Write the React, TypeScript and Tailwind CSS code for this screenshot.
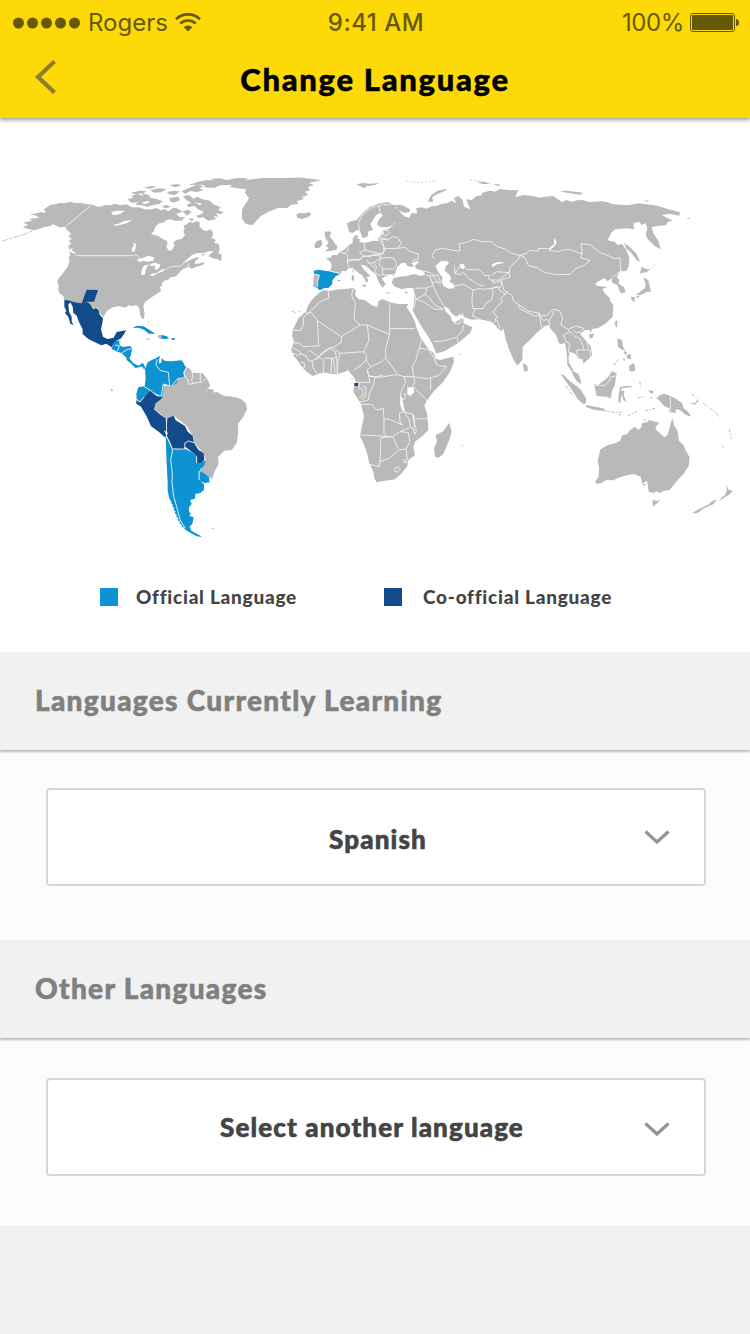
import type { ReactNode } from "react";

const LAND = "#b9b9b9";
const OFFICIAL = "#0d93d2";
const CO_OFFICIAL = "#114b8a";

/* Every map region is drawn on a grid three times finer than the page. */
function Region({ x, y, children }: { x: number; y: number; children: ReactNode }) {
  return (
    <g transform={`translate(${x} ${y}) scale(0.33333)`} strokeLinejoin="round">
      {children}
    </g>
  );
}

function Borders({ d }: { d: string }) {
  return <path d={d} fill="none" stroke="#f1f1f1" strokeWidth="2.800" strokeLinejoin="round" />;
}

function Sea({ d }: { d: string }) {
  return <path d={d} fill="#fff" />;
}

function NorthAmerica() {
  return (
    <Region x={0} y={170}>
      <path
        fill={LAND}
        d="M68 172L85 165 70 158 95 152 88 146 118 143 106 136 88 134 122 127 138 128 132 118 150 105 163 103 180 99 195 99 210 95 225 99 245 99 262 103 275 103 288 109 300 110 315 105 330 106 345 101 360 106 380 103 395 112 415 112 435 118 455 118 470 114 482 121 494 117 505 124 520 113 535 116 548 125 528 132 540 142 556 140 545 152 525 152 510 148 500 150 488 158 478 160 465 172 462 183 453 192 475 198 486 206 500 212 503 218 499 232 508 243 516 240 523 228 521 215 532 209 545 207 555 195 550 185 554 176 551 168 560 162 570 155 578 158 590 153 600 158 598 168 606 178 618 184 632 178 640 190 635 203 648 210 642 219 657 222 658 235 640 243 625 244 612 249 592 249 575 256 562 267 548 280 560 275 575 268 590 262 598 264 586 273 584 282 600 280 614 275 610 284 585 292 575 297 568 290 550 296 540 305 533 315 524 320 510 322 505 331 496 330 485 340 487 345 480 352 483 362 470 372 450 385 435 396 430 408 434 430 432 446 426 447 420 433 418 414 408 405 396 409 386 406 375 413 355 408 335 413 320 424 310 442 300 430 297 418 288 412 282 418 270 402 262 396 245 400 225 397 205 390 193 390 190 378 178 370 175 358 176 345 172 335 176 325 190 308 203 290 209 272 206 262 212 255 207 245 220 249 228 256 223 245 207 237 205 226 214 222 205 212 216 208 205 200 214 190 203 182 195 170 178 172 160 163 150 168 130 172 120 176 100 180 82 176Z"
      />
      <path
        fill={LAND}
        d="M382 88L400 83 394 77 412 72 430 78 425 70 445 74 452 83 470 87 488 94 478 102 460 105 440 110 425 106 405 105 415 97 396 99ZM392 68L420 62 440 64 430 70 405 73ZM450 60L480 55 500 58 482 67 462 68ZM430 53L455 48 470 50 450 56ZM508 46L530 42 545 46 525 52ZM500 66L525 62 540 65 524 75 508 73ZM545 64L575 50 590 44 612 48 598 55 612 60 592 66 570 63 556 72ZM508 84L535 80 540 90 522 98 510 94ZM548 78L568 76 580 86 592 80 607 88 630 92 640 103 662 112 655 121 672 126 660 133 648 130 655 140 641 138 648 148 624 152 610 142 596 144 587 137 605 133 611 125 594 118 582 108 566 112 560 104 574 98 560 91ZM565 45L595 35 620 30 645 31 630 26 660 25 680 30 710 24 745 25 730 34 700 38 685 45 660 46 645 53 618 53 610 44ZM548 124L565 119 575 127 560 137ZM565 145L583 147 575 154ZM625 258L648 237 660 235 655 249 665 255 663 274 650 266 640 266ZM604 252L615 253 608 258ZM485 110L500 104 512 110 499 115Z"
      />
      <path fill="none" stroke={LAND} strokeWidth="2.5" strokeDasharray="16 4 9 3" d="M8 213L40 203 75 192 110 177 150 165M207 190L220 180 218 200 224 220 222 240" />
      <Sea d="M333 127L350 122 375 122 360 132 340 136ZM338 165L356 161 375 152 397 151 376 161 347 167ZM400 220L408 221 405 243 397 247 395 233 401 230ZM410 268L430 263 445 257 462 262 460 272 440 275 432 272 418 277ZM432 287L446 283 438 297 434 314 424 315 425 299ZM449 283L466 278 481 284 478 292 469 300 464 296 466 287 451 288ZM448 316L466 308 472 310 458 319ZM470 307L490 299 492 303 474 310ZM205 205L212 202 209 215ZM210 237L218 234 214 244ZM425 98L442 92 450 96 435 103ZM583 95L605 101 600 106Z" />
      <path fill={LAND} d="M726 120L738 100 748 85 740 55 720 56 686 50 712 45 740 50 751 30 751 165 735 160 726 145Z" />
      <Borders d="M275 104L197 170M228 257L403 257M405 253L418 262M482 300L500 297 515 290 542 288 556 275M562 293L567 278" />
      <path fill={CO_OFFICIAL} d="M260 359L294 360 282 395 262 395 245 400ZM193 390L205 391 225 397 245 400 262 396 270 402 280 418 288 414 296 420 299 434 309 445 307 460 303 478 309 500 322 507 341 503 350 486 378 481 372 493 362 506 352 511 342 520 335 532 319 521 304 526 285 517 264 506 248 492 248 478 238 458 230 437 220 428 218 410 211 397 205 404 207 425 215 440 215 455 221 465 211 461 205 440 195 430 199 422 193 410Z" />
      <path fill={OFFICIAL} d="M397 474L411 467 430 469 448 479 466 491 446 491 432 479 415 473ZM483 495L499 498 508 505 495 507 484 506ZM346 512L357 512 359 526 369 531 390 528 397 535 392 558 385 571 378 562 364 549 352 545 334 536Z" />
      <path fill={LAND} d="M475 495L483 496 482 506 474 503ZM437 505L450 507 445 509ZM359 508L362 512 358 524ZM446 452L449 462 444 456Z" />
      <path fill={CO_OFFICIAL} d="M515 505H525V509H515Z" />
      <Borders d="M346 525L358 528 352 543M366 548L384 538 397 536" />
    </Region>
  );
}

function SouthAmerica() {
  return (
    <Region x={90} y={280}>
      <path
        fill={LAND}
        d="M287 261L300 266 307 278 320 279 338 280 350 295 361 316 347 336 356 326 372 330 370 338 380 335 403 348 420 349 437 352 454 358 468 371 471 387 460 411 445 430 444 462 440 489 425 510 403 512 384 531 386 552 374 574 366 598 350 585 328 573 341 550 348 540 340 520 313 488 310 470 290 438 252 407 229 416 211 402 193 386 197 369 216 355 220 317 245 318 262 297 285 291 282 276ZM366 743L374 745 364 748ZM168 176L180 178 172 180ZM207 166L214 169 212 176Z"
      />
      <path fill={OFFICIAL} d="M107 225L118 235 130 250 146 257 158 248 165 260 163 270 156 259 147 262 136 264 122 250 110 240ZM165 266L173 247 185 240 198 235 210 227 207 240 209 251 215 243 214 235 226 243 242 244 260 242 275 241 281 250 288 263 280 276 283 291 263 295 260 310 244 318 220 312 220 332 216 357 205 345 187 336 180 330 160 355 150 366 140 357 139 341 145 320 164 317 167 298ZM64 328L70 331 64 333ZM227 470L236 480 245 503 260 508 285 506 300 514 320 528 320 545 332 550 348 540 342 558 330 568 327 600 342 613 342 629 331 639 316 642 315 656 300 660 305 672 297 682 297 694 303 704 296 707 311 712 307 731 299 740 304 752 327 765 336 771 320 769 302 759 287 750 275 735 261 707 251 680 243 663 238 656 233 632 233 609 230 551ZM328 573L342 579 357 590 359 607 344 609 328 602Z" />
      <path fill="none" stroke={OFFICIAL} strokeWidth="4" strokeDasharray="7 4" d="M245 665L254 690 267 723 283 745" />
      <path fill={CO_OFFICIAL} d="M139 359L150 366 163 350 181 330 200 347 214 350 214 357 197 370 192 388 211 404 229 416 230 443 229 458 226 473 207 456 183 439 171 411 153 380 139 371ZM232 415L251 407 257 421 285 438 293 455 308 467 312 488 325 509 341 520 343 540 334 549 320 549 320 529 302 513 287 501 280 508 248 506 239 483 229 467 230 443Z" />
      <Borders d="M180 330L160 318 143 321M180 330L200 347 214 348 220 312 239 318 235 277 210 271 198 255 202 238M263 296L245 318M229 416L230 467M229 467L248 510 242 540 247 580 246 605 251 649 260 680 270 719 286 745M247 507L284 507 285 489 296 483 312 488M320 549L320 529M328 573L327 600M288 264L282 283 294 300 296 313 323 308 335 307 348 296M306 278L309 291 304 301 311 309M331 280L331 305M139 359L150 366 163 350" />
      <Sea d="M222 450L234 460 229 466ZM211 236L214 248 207 250Z" />
    </Region>
  );
}

function Greenland() {
  return (
    <path
      fill={LAND}
      d="M228 184L238 181 262 178 285 178 300 177.500 321 180 309 183 314 185 308 187 310 190 305 192 308 195 302 197 304 199 297 201 298 204 291 205 287 208 278 208 268 212 261 216 256 221 253 225 247 224 243 218 242 211 244 206 247 203 249 198 245 193 246 189 237 188Z"
    />
  );
}

function Eurasia() {
  return (
    <Region x={280} y={170}>
      {/* mainland */}
      <path
        fill={LAND}
        d="M182 312L165 306 151 303 155 285 149 273 137 265 152 263 157 255 171 256 180 245 195 238 204 226 218 220 218 206 226 196 235 196 231 205 240 208 238 217 260 218 280 212 295 213 295 202 303 198 303 190 312 192 308 180 325 178 345 160 335 145 322 118 326 103 345 105 365 105 390 118 388 127 372 128 355 120 365 131 376 140 388 143 394 130 412 130 408 115 425 112 440 116 455 109 470 108 485 101 500 100 515 92 529 100 522 84 535 78 548 90 552 110 571 118 563 98 558 88 575 90 590 78 606 76 605 69 630 62 645 65 660 57 690 61 715 60 706 82 730 75 760 78 780 83 795 80 820 78 830 85 845 96 860 90 875 96 890 91 910 90 925 96 940 95 965 94 980 96 1000 103 1020 104 1045 106 1075 100 1100 103 1125 106 1160 116 1200 127 1198 137 1170 132 1145 135 1160 143 1178 152 1163 156 1158 166 1132 168 1115 172 1120 190 1135 212 1142 238 1125 229 1105 210 1097 195 1102 175 1097 160 1085 165 1077 155 1060 160 1062 178 1040 175 1005 178 993 190 983 210 990 213 1005 215 1012 225 1026 222 1038 238 1048 262 1046 290 1038 303 1028 304 1022 300 1010 322 1018 330 1015 340 1032 352 1037 367 1022 370 1012 346 995 337 996 326 982 333 972 325 946 340 950 347 982 351 967 357 974 370 990 385 990 392 1000 405 998 440 978 460 955 474 935 478 933 489 928 480 915 480 900 492 916 510 931 527 937 556 922 570 910 581 908 568 895 566 886 552 870 545 866 560 866 577 876 595 882 600 876 602 862 585 861 555 855 520 840 522 835 515 828 495 815 480 805 465 795 468 772 487 750 510 728 530 727 570 712 587 701 570 690 545 678 512 670 475 665 484 652 475 646 466 635 455 600 448 575 449 550 440 540 432 528 440 515 430 505 415 490 407 498 425 513 440 515 452 525 458 545 445 551 447 550 460 577 472 570 490 545 510 530 522 510 533 495 543 468 551 460 528 445 500 425 470 405 435 398 420 402 395 404 372 400 355 385 353 365 358 345 350 335 340 340 325 360 320 340 318 330 313 305 325 317 342 308 354 296 336 287 312 272 301 255 286 242 284 250 297 271 318 260 322 265 330 261 340 246 316 228 303 217 293 204 296 198 304 185 303Z"
      />
      {/* Scandinavia and islands */}
      <path
        fill={LAND}
        d="M201 160L215 153 230 150 245 133 255 122 270 110 295 101 310 98 328 97 337 108 330 115 335 135 346 152 340 164 322 172 300 171 291 162 298 146 309 136 300 128 288 136 280 149 271 162 279 180 266 184 262 201 247 204 239 181 231 180 218 189 207 185ZM134 185L147 184 154 189 148 199 158 210 166 222 173 229 169 239 150 243 134 244 147 234 137 229 146 219 136 204ZM105 235L103 224 110 213 124 209 127 223 120 233ZM49 136L55 129 75 130 90 126 93 134 83 142 65 147 52 143ZM230 43L247 39 270 41 298 39 283 46 260 48 254 55 238 47ZM443 94L454 75 473 62 502 56 496 62 474 71 457 82 459 97ZM590 35L615 35 630 42 608 42ZM640 42L660 43 655 49ZM242 344L259 344 256 352ZM216 313L223 321 221 333 215 330ZM217 298L222 302 219 310ZM318 367L336 369 320 371ZM372 367L387 365 378 371ZM840 64L860 62 910 68 900 74 860 68ZM1092 92L1108 91 1100 95ZM1032 218L1052 233 1070 252 1080 275 1072 272 1053 248 1040 236Z"
      />
      <path fill={LAND} d="M1084 290L1100 298 1111 298 1099 307 1086 308 1080 312ZM1090 322L1105 330 1108 345 1113 365 1100 366 1090 371 1080 376 1068 374 1085 362 1095 355 1097 342ZM1052 380L1064 381 1064 397 1055 391ZM1068 378L1080 378 1071 384ZM1008 450L1013 455 1010 474 1004 463ZM927 495L940 491 939 501 932 506ZM729 580L741 586 744 600 732 602ZM1012 505L1026 510 1029 530 1035 541 1025 537 1014 530ZM1032 543L1042 546 1037 555ZM1040 558L1052 552 1053 567 1044 566ZM1028 566L1036 566 1032 574ZM1052 590L1062 582 1067 600 1047 602Z" />
      <path fill="none" stroke={LAND} strokeWidth="2" strokeDasharray="6 5" d="M1003 583L1016 566M1112 295L1128 280M380 33L395 36 430 38 470 32M570 30L600 34" />
      {/* inland seas */}
      <Sea d="M345 311L352 290 365 279 377 278 381 287 394 291 402 289 393 280 411 273 417 275 404 289 410 297 428 303 436 313 424 318 402 312 380 318 350 321 340 316ZM466 288L482 274 500 272 507 280 497 289 494 302 510 316 513 327 508 334 522 344 523 355 506 356 490 347 485 335 487 322 475 306ZM539 283L551 281 556 292 548 298 541 293ZM634 285L650 277 670 276 670 280 652 282 640 291ZM822 204L831 217 823 229 810 239 806 236 822 222ZM548 427L551 440 545 440ZM346 110L352 112 349 116Z" />
      {/* Iberia */}
      <path fill={LAND} d="M102 314L118 315 112 335 112 353 99 350Z" />
      <path fill={OFFICIAL} d="M101 302L115 299 140 303 160 305 180 313 167 319 157 331 157 342 146 353 131 355 119 361 109 352 113 335 118 315 103 313ZM174 329L182 332 176 334ZM36 422L40 424 38 427ZM44 425L48 426 45 428ZM57 424L60 422 59 427Z" />
      <Borders d="M151 304L181 310M113 352V335L118 315 104 314M181 247L193 250 204 257 202 276 208 295M204 226L204 242 193 250M251 218L255 240 238 248 250 258 240 268 205 270M255 240L275 246 308 252 312 238 308 213M252 257L272 261 278 254 308 252M203 277L215 270 240 270 249 261M308 252L316 238 300 210 328 207 337 200 353 203 364 220 352 235 310 236M352 235L375 232 390 245 415 252 415 265 396 273M250 260L278 256 302 258 300 266 280 278 266 280 262 270M302 264L325 263 340 264 350 281 345 295M305 262L296 280 308 297 342 297M280 278L290 292 285 305 293 315 305 315M308 297L308 314 330 315 342 313M270 282L281 292 286 294M292 203L315 205 325 213M298 190L320 197 330 187M305 180L327 182M237 195L239 180 235 160 244 140 260 122 280 110 300 107M300 127L297 108 308 103 320 105 330 103M405 298L440 305 460 312M437 315L450 318 474 315 482 338M450 318L456 338 470 335 478 340M460 320L470 332 481 340M404 355L440 354 460 346 456 335M440 354L436 373 408 388 404 374M436 373L447 382 464 405 490 418M408 388L430 395 464 418 488 418M408 388L401 415M460 346L467 366 482 392 490 407M519 348L550 343 580 360 576 380 577 408 585 418 577 438 598 447M577 416L609 416 617 400 635 391 640 367 635 355 650 350 660 355M580 360L600 355 612 358 635 355 655 350M463 268L456 257 465 240 490 235 512 240 540 243 538 222 560 217 582 208 605 215 632 214 652 230 678 238 692 249 720 256M523 285L525 310 540 314 551 307 566 325 595 344 613 348M525 310L545 282 560 298 600 300 615 317 630 316 625 325 640 333M635 317L650 305 688 308 690 290 713 270 720 256M688 308L655 330 636 330 640 340 660 332 665 344M688 309L690 322 664 329M665 344L655 358 675 373 684 365 662 385 667 397 650 410 640 427 650 440 643 458M664 329L672 362 695 375 702 395 718 405 745 423 777 430 778 438 800 436 818 418 838 422 848 443 842 465 865 478 887 468 912 475 905 481M715 405L722 418 770 440 777 430M778 427L780 448 785 472M780 436L790 452 802 448 808 455 810 470M805 455L818 435 820 423M720 256L740 250 750 241 775 243 776 235 802 236 810 241 835 245 850 240 870 238 893 248 907 250M720 256L737 265 745 287 770 292 792 307 830 314 870 313 888 295 912 287 930 272 902 263 907 250 903 222 930 223 958 247 980 255 1005 266 1020 263 1022 304M990 330L1010 312 1018 305M865 478L870 485 850 495 858 515 870 520 866 535 867 550M870 485L885 500 898 504 910 530 912 540 930 540 932 560M912 540L890 540 892 555 900 568M878 480L890 488 900 485 920 515 925 535M660 476L650 450M462 514L485 514 530 502 548 482 550 465M520 460L538 462 548 445M530 503L535 518" />
    </Region>
  );
}

function Africa() {
  return (
    <Region x={280} y={270}>
      <path
        fill={LAND}
        d="M118 68L128 61 150 63 175 58 205 56 218 54 228 60 225 75 230 82 238 88 255 91 265 98 280 108 292 110 296 93 308 87 330 97 355 102 375 102 385 102 380 111 392 130 405 155 410 175 423 205 435 222 448 240 462 250 467 266 480 270 500 265 520 260 522 275 510 305 490 335 460 365 440 392 433 407 441 430 443 450 445 480 425 500 405 515 400 530 405 555 385 570 382 588 365 610 345 628 310 633 290 637 283 625 280 605 268 580 260 545 250 520 240 498 245 470 252 440 243 402 232 385 220 365 222 350 228 335 221 320 210 308 205 300 195 305 180 310 160 313 140 308 120 310 98 318 80 305 65 290 50 268 38 255 48 251 36 248 34 237 42 215 36 198 38 180 48 160 55 145 78 125 85 105 95 90 110 75ZM508 458L515 485 509 507 490 552 476 563 465 560 462 535 471 515 467 495 490 484ZM546 525L550 527 547 530ZM560 520L564 521 562 523ZM538 252L546 253 540 255Z"
      />
      <Sea d="M383 352L400 354 403 366 390 379 381 370ZM360 377L366 382 372 413 375 426 368 421 361 400ZM397 430L403 438 405 465 410 472 403 471Z" />
      <Borders d="M145 63L147 84 118 97 95 120 70 142 70 165 62 182 38 180M78 130L95 128M96 130L112 152 184 200 240 165 222 147 226 100 215 78 218 57M112 152L116 228 68 230 60 220 42 218M184 200L184 217 160 232 150 234 116 260 105 268M240 165L262 165 328 193 328 176 330 98M328 176H405M262 165L267 210 252 245 180 250 160 232M328 193L322 218 316 240 318 265 353 314 372 320 400 320 397 290 408 268 418 235 426 205M418 235L445 238 462 262 470 285 500 290 475 317 440 326 400 320M316 265L300 278 272 290 258 270 260 257 250 245M272 290L262 300 267 318 300 322 340 315 353 314M258 270L245 284 220 302M262 300L270 337 228 337M267 318L285 322 280 345 268 370 265 390 240 396M285 322L310 315M372 320L377 335 368 355 362 370 362 410 370 424 358 430 360 455 368 465 325 447 312 448 310 415 290 420 275 403 245 403M400 320L405 335 397 352M380 352L403 353 435 385 440 392M452 325V358M370 373L378 372 374 388 363 388M374 426L400 433M407 447L442 446M312 448V490L320 499 242 495M320 499L338 500 360 485 392 472 386 445 370 424M303 505L300 575 298 590 270 583M302 503L338 500M300 575L328 565 355 540 378 537 390 515 385 488 360 485M338 500L355 535M378 537L382 570M372 568L382 576 373 578ZM344 597L354 590 361 597 351 607 344 603ZM392 472L410 480 405 493 398 472M38 233L60 245 62 252 48 257M62 252L78 257 88 275 96 272 98 290 115 318M62 277L72 277 74 292 64 292M96 272L120 262 132 275 130 310M132 265L155 265 153 308M155 265L170 262 172 309M160 266L165 308M180 250L173 280 172 309M115 260L130 245 150 234 165 245 170 262M85 240L98 248 116 260M238 340L236 355 248 357 250 375 237 384M248 350L258 350 257 378 245 390" />
      <path fill={CO_OFFICIAL} d="M223 339H234V348H223Z" />
      <path fill={OFFICIAL} d="M214 325L218 326 216 329Z" />
    </Region>
  );
}

function Oceania() {
  return (
    <Region x={490} y={330}>
      <path
        fill={LAND}
        d="M316 454L326 440 327 410 323 395 331 358 352 346 375 340 390 333 397 316 412 312 420 300 435 290 445 300 454 292 456 280 472 276 480 271 508 278 500 287 496 298 512 312 524 322 533 315 541 285 547 264 553 288 563 302 567 333 580 345 588 363 599 382 596 408 580 433 563 450 539 480 522 482 508 489 500 484 491 489 476 485 473 462 470 452 457 461 452 440 432 432 410 436 382 444 371 451 350 450 332 460 319 461ZM455 465L468 460 464 467ZM488 509L500 513 512 510 500 521 488 530ZM710 461L714 478 728 484 716 495 705 501 688 513 695 501 705 495 710 482ZM606 550L625 538 654 524 672 510 680 509 670 523 642 535 622 549Z"
      />
      <path
        fill={LAND}
        d="M211 131L224 137 233 148 247 159 270 176 280 191 288 205 288 220 280 222 263 208 250 187 234 163ZM288 225L310 229 344 236 342 243 311 239 288 231ZM312 163L324 165 344 150 357 139 365 124 380 130 377 145 375 165 365 185 363 205 350 200 320 198 316 180ZM234 97L244 110 246 122 265 131 272 150 273 162 262 155 250 137 246 125 236 111ZM390 171L404 168 427 168 425 171 397 174 392 183 404 182 401 195 410 217 400 210 395 193 391 219 385 216 386 195ZM474 181L491 183 488 192 480 188ZM499 204L510 196 521 191 542 198 562 209 577 220 580 234 593 244 604 260 588 255 570 240 556 238 558 248 538 247 538 235 522 228 510 213ZM597 220L614 219 623 209 626 213 614 224ZM383 27L395 30 397 52 405 62 390 56ZM402 65L408 68 405 75ZM410 76L420 72 422 87 412 86ZM418 108L432 98 434 122 424 125 418 118ZM100 100L110 108 113 122 102 125ZM298 14L312 10 308 22 300 25ZM690 341L704 354 698 352Z"
      />
      <path fill="none" stroke={LAND} strokeWidth="3" strokeDasharray="9 5 4 4" d="M343 242L372 247 398 247M385 252L396 257M413 257L440 245M372 107L386 88M450 155L451 175M444 203L467 200M480 204L494 203M228 168L250 199M640 220L655 231M661 236L676 246 688 262M605 193L626 207M718 298L724 326M460 270L480 271M465 243L497 234" />
      <Borders d="M541 197V246M314 166L345 166 357 154 363 141 377 138" />
    </Region>
  );
}

function WorldMap() {
  return (
    <svg className="block h-[400px] w-[750px]" viewBox="0 160 750 400" aria-hidden="true">
      <Greenland />
      <NorthAmerica />
      <SouthAmerica />
      <Eurasia />
      <Africa />
      <Oceania />
      <path d="M687 218.500h3" stroke="#f6b9b9" />
    </svg>
  );
}

function StatusBar() {
  return (
    <div className="grid h-[46px] grid-cols-3 items-center pr-[11px] pl-[13px] text-[24px] leading-[46px] text-[#675903]">
      <div className="flex items-center">
        <svg className="h-3 w-[67px]" viewBox="0 0 67 12" fill="currentColor">
          {[5.5, 19.5, 33.5, 47.5, 61.5].map((cx) => (
            <circle key={cx} cx={cx} cy="6" r="5.500" />
          ))}
        </svg>
        <span className="ml-2">Rogers</span>
        <svg className="mb-[2px] ml-[7px] h-[19px] w-[26px]" viewBox="0 0 26 19" fill="none" stroke="currentColor" strokeWidth="2.700">
          <path d="M1 6.200Q6 1.400 13 1.400T25 6.200M5.300 10.500Q8.400 7.500 13 7.500T20.700 10.500" />
          <path d="M13 18.500L8.700 14.200Q10.500 12.600 13 12.600T17.300 14.200Z" fill="currentColor" stroke="none" />
        </svg>
      </div>
      <span className="text-center font-medium tracking-[0.500px]">9:41 AM</span>
      <div className="flex items-center justify-end">
        <span className="tracking-[-0.400px]">100%</span>
        <svg className="mb-[1px] ml-[6px] h-[19px] w-[49px]" viewBox="0 0 49 19">
          <rect x="0.500" y="0.500" width="44" height="18" rx="2.500" fill="none" stroke="currentColor" />
          <rect x="2" y="2" width="41" height="15" rx="1" fill="currentColor" />
          <path d="M46 6q3 0 3 3.500T46 13Z" fill="currentColor" />
        </svg>
      </div>
    </div>
  );
}

function SectionTitle({ children }: { children: ReactNode }) {
  return (
    <h2 className="relative h-[98px] bg-[#f1f1f1] pl-[35px] font-['Lato'] text-[28px] leading-[97px] font-black tracking-[1.320px] text-[#808080] shadow-[0_2px_2px_rgba(0,0,0,0.26)] [-webkit-text-stroke:0.6px_#808080]">
      {children}
    </h2>
  );
}

function LanguageSelect({ label, labelClass, iconClass }: { label: string; labelClass: string; iconClass: string }) {
  return (
    <button className="grid h-[98px] w-[660px] grid-cols-[1fr_auto_1fr] items-center rounded-[4px] border-2 border-[#d6d6d6] bg-white font-['Lato'] text-[26px] font-black tracking-[1.120px] text-[#444] [-webkit-text-stroke:0.6px_#444]">
      <span />
      <span className={labelClass}>{label}</span>
      <svg className={iconClass} viewBox="0 0 26 15" fill="none" stroke="#949494" strokeWidth="3.200">
        <path d="M1.500 1.500L13 12 24.500 1.500" />
      </svg>
    </button>
  );
}

export default function App() {
  return (
    <main className="flex h-[1334px] w-[750px] flex-col overflow-hidden bg-[#f1f1f1] font-['Inter',sans-serif]">
      <header className="relative h-[118px] bg-[#fdd908] shadow-[0_2px_4px_rgba(0,0,0,0.4)]">
        <StatusBar />
        <div className="grid h-[64px] grid-cols-[1fr_auto_1fr] items-center">
          <svg className="mb-[5px] ml-[34px] h-[36px] w-[24px]" viewBox="0 0 24 36" fill="none" stroke="#8b7d2c" strokeWidth="4.200">
            <path d="M20.500 2.500L4 18 20.500 33.500" />
          </svg>
          <h1 className="font-['Lato'] text-[31px] leading-[66px] font-black tracking-[1.700px] text-black [-webkit-text-stroke:0.5px_#000]">Change Language</h1>
          <span />
        </div>
      </header>

      <section className="h-[534px] bg-white pt-[42px]">
        <WorldMap />
        <div className="mt-[25px] flex h-6 items-center pl-[100px] font-['Lato'] text-[19px] font-black tracking-[0.750px] text-[#444]">
          <span className="size-[18px] bg-[#0d93d2]" />
          <span className="ml-[18px] w-[248px]">Official Language</span>
          <span className="size-[18px] bg-[#114b8a]" />
          <span className="ml-[21px]">Co-official Language</span>
        </div>
      </section>

      <SectionTitle>Languages Currently Learning</SectionTitle>
      <section className="h-[190px] bg-[#fcfcfc] pt-[38px] pl-[46px]">
        <LanguageSelect label="Spanish" labelClass="translate-x-[2px] translate-y-[2px]" iconClass="mr-[34px] h-[15px] w-[26px] justify-self-end" />
      </section>

      <SectionTitle>Other Languages</SectionTitle>
      <section className="h-[188px] bg-[#fcfcfc] pt-[40px] pl-[46px]">
        <LanguageSelect label="Select another language" labelClass="-translate-x-[4px]" iconClass="mr-[34px] mt-[4px] h-[15px] w-[26px] justify-self-end" />
      </section>
    </main>
  );
}
